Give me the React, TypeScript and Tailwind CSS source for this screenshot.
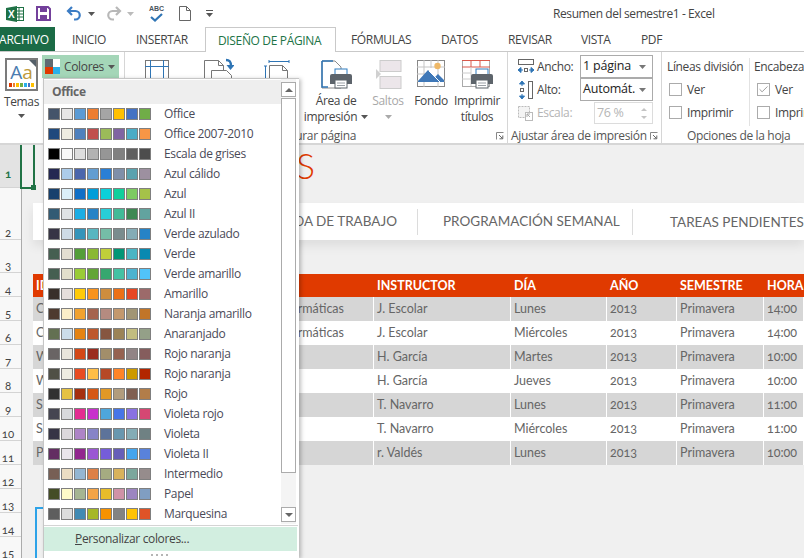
import { Check } from "lucide-react";

const uiFont = "font-['Open_Sans',sans-serif]";

const tabs = [
  { label: "INICIO", width: "w-[81px]", pad: "pl-[17px]" },
  { label: "INSERTAR", width: "w-[69px]", pad: "pl-0" },
];
const tabsAfter = [
  { label: "FÓRMULAS", width: "w-[105px]", pad: "pl-[15px]" },
  { label: "DATOS", width: "w-[67px]", pad: "pl-0" },
  { label: "REVISAR", width: "w-[73px]", pad: "pl-0" },
  { label: "VISTA", width: "w-[60px]", pad: "pl-0" },
  { label: "PDF", width: "w-[40px]", pad: "pl-0" },
];

const themes: { name: string; colors: string[] }[] = [
  { name: "Office", colors: ["#44546a", "#e7e6e6", "#5b9bd5", "#ed7d31", "#a5a5a5", "#ffc000", "#4472c4", "#70ad47"] },
  { name: "Office 2007-2010", colors: ["#1f497d", "#eeece1", "#4f81bd", "#c0504d", "#9bbb59", "#8064a2", "#4bacc6", "#f79646"] },
  { name: "Escala de grises", colors: ["#000000", "#f8f8f8", "#dddddd", "#b2b2b2", "#969696", "#808080", "#5f5f5f", "#4d4d4d"] },
  { name: "Azul cálido", colors: ["#242852", "#acccea", "#4a66ac", "#629dd1", "#297fd5", "#7f8fa9", "#5aa2ae", "#9d90a0"] },
  { name: "Azul", colors: ["#17406d", "#dbeff9", "#0f6fc6", "#009dd9", "#0bd0d9", "#10cf9b", "#7cca62", "#a5c249"] },
  { name: "Azul II", colors: ["#335b74", "#dfe3e5", "#1cade4", "#2683c6", "#27ced7", "#42ba97", "#3e8853", "#62a39f"] },
  { name: "Verde azulado", colors: ["#373545", "#cedbe6", "#3494ba", "#58b6c0", "#75bda7", "#7a8c8e", "#84acb6", "#2683c6"] },
  { name: "Verde", colors: ["#455f51", "#e3ded1", "#549e39", "#8ab833", "#c0cf3a", "#029676", "#4ab5c4", "#0989b1"] },
  { name: "Verde amarillo", colors: ["#455f51", "#e2dfcc", "#99cb38", "#63a537", "#37a76f", "#44c1a3", "#4eb3cf", "#51c3f9"] },
  { name: "Amarillo", colors: ["#39302a", "#e5dedb", "#ffca08", "#f8931d", "#ce8d3e", "#ec7016", "#e64823", "#9c6a6a"] },
  { name: "Naranja amarillo", colors: ["#4e3b30", "#fbeec9", "#f0a22e", "#a5644e", "#b58b80", "#c3986d", "#a19574", "#c17529"] },
  { name: "Anaranjado", colors: ["#637052", "#ccddea", "#e48312", "#bd582c", "#865640", "#9b8357", "#c2bc80", "#94a088"] },
  { name: "Rojo naranja", colors: ["#696464", "#e9e5dc", "#d34817", "#9b2d1f", "#a28e6a", "#956251", "#918485", "#855d5d"] },
  { name: "Rojo naranja", colors: ["#505046", "#eeece1", "#e84c22", "#ffbd47", "#b64926", "#ff8427", "#cc9900", "#b22600"] },
  { name: "Rojo", colors: ["#323232", "#e5c243", "#a5300f", "#d55816", "#e19825", "#b19c7d", "#7f5f52", "#b27d49"] },
  { name: "Violeta rojo", colors: ["#454551", "#d8d9dc", "#e32d91", "#c830cc", "#4ea6dc", "#4775e7", "#8971e1", "#d54773"] },
  { name: "Violeta", colors: ["#373545", "#dcd8dc", "#ad84c6", "#8784c7", "#5d739a", "#6997af", "#84acb6", "#6f8183"] },
  { name: "Violeta II", colors: ["#632e62", "#eae5eb", "#92278f", "#9b57d3", "#755dd9", "#665eb8", "#45a5ed", "#5982db"] },
  { name: "Intermedio", colors: ["#775f55", "#ebddc3", "#94b6d2", "#dd8047", "#a5ab81", "#d8b25c", "#7ba79d", "#968c8c"] },
  { name: "Papel", colors: ["#444d26", "#fefac9", "#a5b592", "#f3a447", "#e7bc29", "#d092a7", "#9c85c0", "#809ec2"] },
  { name: "Marquesina", colors: ["#5e5e5e", "#dddddd", "#418ab3", "#a6b727", "#f69200", "#838383", "#fec306", "#df5327"] },
];

const rowHeaders: { n: number; h: string }[] = [
  { n: 1, h: "h-[43px] pb-[7px]" },
  { n: 2, h: "h-[52px]" },
  { n: 3, h: "h-[33px]" },
  ...[4, 5, 6, 7, 8, 9, 10, 11, 12, 13, 14, 15].map((n) => ({ n, h: "h-[24px]" })),
];

const classes = [
  ["CS-101", "Ciencias informáticas", "J. Escolar", "Lunes", "2013", "Primavera", "14:00"],
  ["CS-102", "Ciencias informáticas", "J. Escolar", "Miércoles", "2013", "Primavera", "14:00"],
  ["WD-110", "", "H. García", "Martes", "2013", "Primavera", "10:00"],
  ["WD-111", "", "H. García", "Jueves", "2013", "Primavera", "10:00"],
  ["SP-200", "", "T. Navarro", "Lunes", "2013", "Primavera", "11:00"],
  ["SP-201", "", "T. Navarro", "Miércoles", "2013", "Primavera", "11:00"],
  ["PS-100", "", "r. Valdés", "Lunes", "2013", "Primavera", "10:00"],
];

const colWidths = ["w-[127px]", "w-[214px]", "w-[137px]", "w-[96px]", "w-[70px]", "w-[87px]", "w-[40px]"];

function Caret({ color = "#555" }: { color?: string }) {
  return (
    <svg width="7" height="4" viewBox="0 0 7 4" className="shrink-0">
      <path d="M0 0h7L3.5 4z" fill={color} />
    </svg>
  );
}

function Launcher() {
  return (
    <svg width="8" height="8" viewBox="0 0 8 8" className="shrink-0">
      <path d="M0.5 7.5V0.5H7.5" fill="none" stroke="#888" />
      <path d="M3 3l3.5 3.5M6.8 3.5v3.3H3.5" fill="none" stroke="#666" />
    </svg>
  );
}

function Printer({ x, y }: { x: number; y: number }) {
  return (
    <g transform={`translate(${x} ${y})`}>
      <rect x="5" y="0" width="12" height="7" fill="#fff" stroke="#2f7cc0" />
      <path d="M2 5h18a2 2 0 0 1 2 2v8h-22v-8a2 2 0 0 1 2-2z" fill="#5d646b" />
      <rect x="5" y="11" width="12" height="8" fill="#fff" stroke="#5d646b" />
      <path d="M7 14h8M7 16.5h8" stroke="#9aa0a6" />
    </g>
  );
}

function QuickBar() {
  return (
    <div className="flex h-[27px] shrink-0 items-center">
      <svg width="18" height="16" viewBox="0 0 18 16" className="ml-[6px]">
        <rect x="8.5" y="1.5" width="9" height="13" fill="#fff" stroke="#1e7145" />
        <path d="M9 5h8M9 8h8M9 11h8M13 2v12" stroke="#1e7145" />
        <path d="M0 2l11-2v16L0 14z" fill="#1e7145" />
        <text x="2" y="12" fontSize="10" fontWeight="700" fill="#fff" fontFamily="Liberation Sans">X</text>
      </svg>
      <svg width="15" height="15" viewBox="0 0 15 15" className="ml-[12px]">
        <path d="M1 1h11l2 2v11H1z" fill="none" stroke="#73409b" strokeWidth="2" />
        <rect x="4" y="1" width="7" height="5" fill="#73409b" />
        <rect x="4" y="9" width="7" height="5" fill="#73409b" />
      </svg>
      <svg width="16" height="15" viewBox="0 0 16 15" className="ml-[15px]">
        <path d="M6 1L2 5l4 4M2 5h7.5a4.2 4.2 0 0 1 0 8.5H8" fill="none" stroke="#3b7cc4" strokeWidth="2.2" />
      </svg>
      <span className="ml-[6px]"><Caret /></span>
      <svg width="16" height="15" viewBox="0 0 16 15" className="ml-[11px]">
        <path d="M10 1l4 4-4 4M14 5H6.5a4.2 4.2 0 0 0 0 8.5H8" fill="none" stroke="#b8b8b8" strokeWidth="2.2" />
      </svg>
      <span className="ml-[5px]"><Caret color="#bbb" /></span>
      <div className="relative ml-[15px] h-[17px] w-[15px]">
        <span className="block text-center font-['Liberation_Sans',sans-serif] text-[7px] leading-[8px] font-bold tracking-normal text-[#4a5560]">ABC</span>
        <svg width="13" height="9" viewBox="0 0 13 9" className="absolute top-[8px] left-[1px]">
          <path d="M1 4l4 3.5L12 1" fill="none" stroke="#2f75b5" strokeWidth="2.2" />
        </svg>
      </div>
      <svg width="12" height="15" viewBox="0 0 12 15" className="ml-[15px]">
        <path d="M.5.5h7l4 4v10H.5zM7.5.5v4h4" fill="#fff" stroke="#666" />
      </svg>
      <svg width="7" height="7" viewBox="0 0 7 7" className="ml-[15px]">
        <path d="M0 .5h7" stroke="#555" />
        <path d="M0 3h7L3.5 7z" fill="#555" />
      </svg>
      <span className="ml-[340px] text-[12px] tracking-[-0.4px] text-[#444]">Resumen del semestre1 - Excel</span>
    </div>
  );
}

function TabStrip() {
  return (
    <div className="flex h-[25px] shrink-0 border-b border-[#c9c9c9] text-[12px] text-[#444]">
      <div className="flex w-[55px] items-center overflow-hidden bg-[#1b6b46] pt-[2px] tracking-[-0.2px] text-white">
        <span className="-ml-[1px]">ARCHIVO</span>
      </div>
      {tabs.map((t) => (
        <div key={t.label} className={`flex items-center pt-[2px] ${t.width} ${t.pad}`}>{t.label}</div>
      ))}
      <div className="z-10 flex h-[25px] w-[131px] items-center border-x border-t border-[#c9c9c9] bg-white pt-[2px] pl-[12px] text-[#217346]">
        DISEÑO DE PÁGINA
      </div>
      {tabsAfter.map((t) => (
        <div key={t.label} className={`flex items-center pt-[2px] ${t.width} ${t.pad}`}>{t.label}</div>
      ))}
    </div>
  );
}

function BigButton({ width, label, sub, caret, muted, children }: {
  width: string;
  label?: string;
  sub?: string;
  caret?: boolean;
  muted?: boolean;
  children: React.ReactNode;
}) {
  return (
    <div className={`flex flex-col items-center ${width} ${muted ? "text-[#a8a8a8]" : "text-[#444]"}`}>
      <div className="flex h-[33px] items-start">{children}</div>
      <span className="h-[16px] text-[12px] leading-[16px] whitespace-nowrap">{label}</span>
      <span className="flex h-[16px] items-center gap-[4px] text-[12px] leading-[16px] whitespace-nowrap">
        {sub}
        {caret ? <Caret color={muted ? "#aaa" : "#555"} /> : null}
      </span>
    </div>
  );
}

function ThemeGroup() {
  return (
    <div className="flex w-[125px] shrink-0 border-r border-[#d6d6d6]">
      <div className="flex w-[42px] shrink-0 flex-col items-center pt-[6px] pl-[1px] text-[12px] text-[#444]">
        <div className="relative flex h-[33px] w-[33px] flex-col border-2 border-[#7b7b7b] bg-white">
          <span className="h-[23px] text-center text-[19px] leading-[25px] tracking-normal text-[#4a7cb0]">
            A<span className="text-[#c09a3a]">a</span>
          </span>
          <div className="mx-[2px] flex h-[4px] gap-[1px]">
            {["#e03a00", "#ed7d31", "#ffc000", "#70ad47", "#29b0ea", "#4472c4", "#ffc000"].map((c, i) => (
              <i key={i} className="flex-1" style={{ background: c }} />
            ))}
          </div>
          <svg width="7" height="7" viewBox="0 0 7 7" className="absolute top-0 right-0">
            <path d="M0 0h7v7z" fill="#55606a" />
          </svg>
        </div>
        <span className="mt-[2px] h-[16px] leading-[18px]">Temas</span>
        <span className="mt-[5px]"><Caret /></span>
      </div>
      <div className="mt-[3px] flex h-[23px] w-[77px] items-center gap-[4px] bg-[#a4d6b8] pl-[3px] text-[12px] text-[#444]">
        <div className="grid h-[15px] w-[15px] shrink-0 grid-cols-2">
          <i className="bg-[#5f6a72]" />
          <i className="bg-white" />
          <i className="bg-[#e03a00]" />
          <i className="bg-[#29b0ea]" />
        </div>
        Colores
        <Caret />
      </div>
    </div>
  );
}

function PageSetupGroup() {
  return (
    <div className="flex w-[383px] shrink-0 flex-col border-r border-[#d6d6d6]">
      <div className="flex h-[76px] shrink-0 pt-[8px]">
        <BigButton width="w-[64px]">
          <svg width="25" height="30" viewBox="0 0 25 30">
            <rect x=".5" y=".5" width="23" height="28" fill="#fff" stroke="#777" />
            <path d="M5.5 0v29M18.5 0v29M0 6.5h24" stroke="#2f75b5" />
          </svg>
        </BigButton>
        <BigButton width="w-[59px]">
          <svg width="30" height="30" viewBox="0 0 30 30" className="-mt-[2px]">
            <path d="M.5 2.5h14l5 5v8h-12v12H.5z" fill="#fff" stroke="#777" />
            <path d="M14.5 2.5v5h5" fill="none" stroke="#777" />
            <path d="M7.5 12.5h15l5 5v11h-20z" fill="#fff" stroke="#777" />
            <path d="M22 2c4 0 5 2 5 6" fill="none" stroke="#2f75b5" strokeWidth="2.4" />
            <path d="M22.5 7h8L26.5 12z" fill="#2f75b5" />
          </svg>
        </BigButton>
        <BigButton width="w-[58px]">
          <svg width="26" height="30" viewBox="0 0 26 30">
            <path d="M5 1.5h20M5 0v3M25 0v3M1.5 6v22M0 6h3" fill="none" stroke="#2f75b5" />
            <path d="M5.5 5.5h13l5 5v18h-18z" fill="#fff" stroke="#777" />
            <path d="M18.5 5.5v5h5" fill="none" stroke="#777" />
          </svg>
        </BigButton>
        <BigButton width="w-[60px]" label="Área de" sub="impresión" caret>
          <svg width="31" height="30" viewBox="0 0 31 30">
            <path d="M1 1h13l6 6v21H1z" fill="#fff" stroke="#8a8a8a" />
            <path d="M1 1h11M1 1v26h6" fill="none" stroke="#2f75b5" strokeWidth="1.5" />
            <Printer x={9} y={9} />
          </svg>
        </BigButton>
        <BigButton width="w-[44px]" label="Saltos" caret muted>
          <svg width="27" height="30" viewBox="0 0 27 30">
            <rect x="5" y=".5" width="21" height="11" fill="#ece6ea" stroke="#ccc" />
            <rect x="5" y="16.5" width="21" height="12" fill="#ece6ea" stroke="#ccc" />
            <path d="M1 9l5 5-5 5z" fill="#d0d0d0" />
          </svg>
        </BigButton>
        <BigButton width="w-[42px]" label="Fondo">
          <svg width="28" height="28" viewBox="0 0 28 28">
            <rect x=".5" y=".5" width="27" height="26" fill="#fff" stroke="#888" />
            <path d="M7 0v27M14 0v8M21 0v27M0 7h28M0 14h8M0 21h28" stroke="#c5c5c5" />
            <circle cx="20.5" cy="6" r="3.2" fill="#eeb868" />
            <path d="M1 21l10-11 7 7 3-3 6 6v2H1z" fill="#3f78b8" />
            <path d="M12 11l13 13" stroke="#fff" strokeWidth="1" />
          </svg>
        </BigButton>
        <BigButton width="w-[50px]" label="Imprimir" sub="títulos">
          <svg width="31" height="30" viewBox="0 0 31 30">
            <rect x=".5" y=".5" width="27" height="26" fill="#fff" stroke="#aaa" />
            <path d="M0 .5h28M0 7h28M9 0v7M18 0v7" stroke="#d9594c" />
            <path d="M0 13h9M0 19h9M9 7v19" stroke="#ccc" />
            <Printer x={9} y={9} />
          </svg>
        </BigButton>
      </div>
      <div className="flex h-[15px] items-center justify-end gap-[140px] pt-[1px] pr-[3px] text-[12px] text-[#555]">
        <span>Configurar página</span>
        <Launcher />
      </div>
    </div>
  );
}

function SelectBox({ value }: { value: string }) {
  return (
    <div className="flex h-[23px] w-[73px] items-center justify-between border border-[#ababab] pr-[6px] pl-[2px] text-[12.5px] tracking-[-0.2px] text-[#222]">
      {value}
      <Caret color="#777" />
    </div>
  );
}

function ScaleGroup() {
  return (
    <div className="flex w-[154px] shrink-0 flex-col border-r border-[#d6d6d6]">
      <div className="flex h-[76px] shrink-0 flex-col pt-[3px] pl-[10px] text-[12px] text-[#444]">
        <div className="flex h-[23px] items-center">
          <svg width="17" height="15" viewBox="0 0 17 15" className="mr-[2px] shrink-0">
            <rect x=".5" y=".5" width="15" height="5" fill="#fff" stroke="#666" />
            <path d="M0 11l3-2.5v5zM16 11l-3-2.5v5zM3 11h2M11 11h2" fill="#2f75b5" stroke="#2f75b5" />
            <rect x="6.5" y="9.5" width="3" height="3" fill="#fff" stroke="#666" />
          </svg>
          <span className="w-[43px]">Ancho:</span>
          <SelectBox value="1 página" />
        </div>
        <div className="flex h-[23px] items-center">
          <svg width="17" height="18" viewBox="0 0 17 18" className="mr-[2px] shrink-0">
            <path d="M4 0l2.5 3h-5zM4 18l2.5-3h-5zM4 3v2M4 13v2" fill="#2f75b5" stroke="#2f75b5" />
            <rect x="2.5" y="7.5" width="3" height="3" fill="#fff" stroke="#666" />
            <rect x="10.5" y=".5" width="4" height="17" fill="#fff" stroke="#666" />
          </svg>
          <span className="w-[43px]">Alto:</span>
          <SelectBox value="Automát." />
        </div>
        <div className="mt-[1px] flex h-[22px] items-center text-[#b5b5b5]">
          <svg width="15" height="15" viewBox="0 0 15 15" className="mr-[4px] shrink-0">
            <rect x=".5" y=".5" width="11" height="11" fill="#f4f4f4" stroke="#bbb" strokeDasharray="2 1" />
            <rect x="7.5" y="6.5" width="7" height="8" fill="#fff" stroke="#bbb" />
            <path d="M9 8l3 3M9 11V8h3" fill="none" stroke="#aaa" />
          </svg>
          <span className="w-[57px]">Escala:</span>
          <div className="flex h-[22px] w-[59px] items-center justify-between border border-[#dcdcdc] pr-[5px] pl-[2px] text-[12.5px]">
            76 %
            <span className="flex flex-col gap-[5px]">
              <svg width="6" height="3" viewBox="0 0 6 3"><path d="M0 3h6L3 0z" fill="#c4c4c4" /></svg>
              <svg width="6" height="3" viewBox="0 0 6 3"><path d="M0 0h6L3 3z" fill="#c4c4c4" /></svg>
            </span>
          </div>
        </div>
      </div>
      <div className="flex h-[15px] items-center justify-between pt-[1px] pr-[3px] pl-[3px] text-[12px] whitespace-nowrap text-[#555]">
        <span>Ajustar área de impresión</span>
        <Launcher />
      </div>
    </div>
  );
}

function OptionRow({ label, checked }: { label: string; checked?: boolean }) {
  return (
    <div className="flex h-[23px] items-center gap-[5px] pl-[2px] whitespace-nowrap">
      <span className="flex h-[13px] w-[13px] items-center justify-center border border-[#ababab] bg-white">
        {checked ? <Check size={11} strokeWidth={1.6} color="#777" /> : null}
      </span>
      {label}
    </div>
  );
}

function SheetOptionsGroup() {
  return (
    <div className="flex w-[142px] shrink-0 flex-col overflow-hidden">
      <div className="flex h-[76px] shrink-0 pt-[6px] text-[12px] text-[#444]">
        <div className="h-[68px] w-[88px] shrink-0 border-r border-[#e2e2e2] pl-[5px]">
          <div className="h-[20px] leading-[18px] whitespace-nowrap">Líneas división</div>
          <OptionRow label="Ver" />
          <OptionRow label="Imprimir" />
        </div>
        <div className="pl-[5px]">
          <div className="-ml-[1px] h-[20px] leading-[18px] whitespace-nowrap">Encabezados</div>
          <OptionRow label="Ver" checked />
          <OptionRow label="Imprimir" />
        </div>
      </div>
      <div className="flex h-[15px] items-center pt-[1px] pl-[25px] text-[12px] whitespace-nowrap text-[#555]">
        Opciones de la hoja
      </div>
    </div>
  );
}

function Sheet() {
  return (
    <div className="flex min-h-0 flex-1 overflow-hidden">
      <div className="w-[22px] shrink-0 border-r border-[#ababab] bg-[#f8f8f8] font-['Lato',sans-serif] text-[11.5px] tracking-normal text-[#444] oldstyle-nums">
        {rowHeaders.map((r) => (
          <div
            key={r.n}
            className={`flex items-end justify-center border-b border-[#d4d4d4] pr-[5px] leading-[12px] ${r.h} ${r.n === 1 ? "bg-[#e3e3e3] font-bold text-[#217346]" : ""}`}
          >
            {r.n}
          </div>
        ))}
      </div>
      <div className="min-w-0 flex-1 overflow-hidden bg-[#f0f0f0] pl-[11px] font-['Lato',sans-serif] tracking-normal text-[#666]">
        <div className="h-[58px] w-[282px] text-right text-[35px] leading-[40px] font-light text-[#e03a00]">CLASES</div>
        <div className="flex h-[37px] items-center bg-white text-[13.5px] shadow-[0_6px_10px_rgba(0,0,0,0.08)]">
          <div className="flex h-[26px] w-[385px] shrink-0 items-center justify-end border-r border-[#dcdcdc] pr-[20px] whitespace-nowrap">AGENDA DE TRABAJO</div>
          <div className="flex h-[26px] w-[215px] shrink-0 items-center border-r border-[#dcdcdc] pl-[25px] whitespace-nowrap">PROGRAMACIÓN SEMANAL</div>
          <div className="mt-[2px] w-[170px] shrink-0 pl-[37px] whitespace-nowrap">TAREAS PENDIENTES</div>
        </div>
        <div className="mt-[34px] flex h-[23px] bg-[#e03a00] pt-[1px] text-[12.5px] font-bold text-white">
          {["ID DE CLASE", "", "INSTRUCTOR", "DÍA", "AÑO", "SEMESTRE", "HORA"].map((h, i) => (
            <div key={i} className={`flex shrink-0 items-center pl-[3px] whitespace-nowrap ${colWidths[i]}`}>{h}</div>
          ))}
        </div>
        {classes.map((row, r) => (
          <div key={r} className={`flex h-[24px] text-[12.5px] ${r % 2 === 0 ? "bg-[#d6d6d6]" : "bg-white"}`}>
            {row.map((cell, c) => (
              <div
                key={c}
                className={`flex shrink-0 items-center border-r border-white pt-[1px] whitespace-nowrap ${colWidths[c]} ${c === 1 ? "justify-end pr-[29px]" : "pl-[3px]"} ${c === 4 || c === 6 ? "oldstyle-nums" : ""}`}
              >
                {cell}
              </div>
            ))}
          </div>
        ))}
      </div>
    </div>
  );
}

function ColorMenu() {
  return (
    <div className="absolute top-[78px] left-[43px] z-20 flex h-[480px] w-[256px] flex-col border-t border-l border-[#c6c6c6] bg-white shadow-[2px_1px_4px_rgba(0,0,0,0.25)]">
      <div className="flex h-[445px] shrink-0">
        <div className="w-[237px] shrink-0 pt-[1px]">
          <div className="flex h-[24px] items-center bg-[#eeeeee] pl-[8px] text-[12px] font-bold text-[#666]">Office</div>
          {themes.map((theme, i) => (
            <div key={i} className="flex h-[20px] items-center pl-[4px] text-[12px] text-[#4a4a58]">
              <div className="flex gap-[1px]">
                {theme.colors.map((c, j) => (
                  <i key={j} className="h-[12px] w-[12px] border border-[#7f7f7f]" style={{ background: c }} />
                ))}
              </div>
              <span className="ml-[13px] whitespace-nowrap">{theme.name}</span>
            </div>
          ))}
        </div>
        <div className="flex w-[15px] shrink-0 flex-col bg-[#f4f4f4] pt-[3px] pb-[2px]">
          <div className="flex h-[15px] shrink-0 items-center justify-center border border-[#ababab] bg-white">
            <svg width="8" height="4" viewBox="0 0 8 4"><path d="M0 4h8L4 0z" fill="#666" /></svg>
          </div>
          <div className="mt-[1px] h-[375px] shrink-0 border border-[#ababab] bg-white" />
          <div className="mt-auto flex h-[15px] shrink-0 items-center justify-center border border-[#ababab] bg-white">
            <svg width="8" height="4" viewBox="0 0 8 4"><path d="M0 0h8L4 4z" fill="#666" /></svg>
          </div>
        </div>
      </div>
      <div className="mt-[1px] h-[1px] w-[254px] shrink-0 bg-[#d4d4d4]" />
      <div className="h-[1px]" />
      <div className="flex h-[24px] w-[253px] shrink-0 items-center bg-[#d2eee0] pl-[31px] text-[12px] text-[#444]">
        <span><u>P</u>ersonalizar colores...</span>
      </div>
      <div className="flex justify-center gap-[3px] pt-[3px] pr-[25px]">
        {[0, 1, 2, 3].map((d) => (
          <i key={d} className="h-[2px] w-[2px] bg-[#b5b5b5]" />
        ))}
      </div>
    </div>
  );
}

export default function App() {
  return (
    <div className={`relative flex h-[558px] w-[804px] flex-col overflow-hidden bg-white tracking-[-0.35px] ${uiFont}`}>
      <QuickBar />
      <TabStrip />
      <div className="flex h-[93px] shrink-0 overflow-hidden border-b-2 border-[#d6d6d6]">
        <ThemeGroup />
        <PageSetupGroup />
        <ScaleGroup />
        <SheetOptionsGroup />
      </div>
      <Sheet />
      {/* selected cell + selected shape sit above the sheet */}
      <div className="absolute top-[145px] left-[20px] z-10 h-[44px] w-[15px] border-x-2 border-b-2 border-[#217346]">
        <span className="absolute -right-[3px] -bottom-[3px] h-[5px] w-[5px] bg-[#217346]" />
      </div>
      <div className="absolute top-[507px] left-[35px] z-10 h-[51px] w-[8px] border-t-2 border-l-2 border-[#2ea3e8]" />
      <ColorMenu />
    </div>
  );
}
